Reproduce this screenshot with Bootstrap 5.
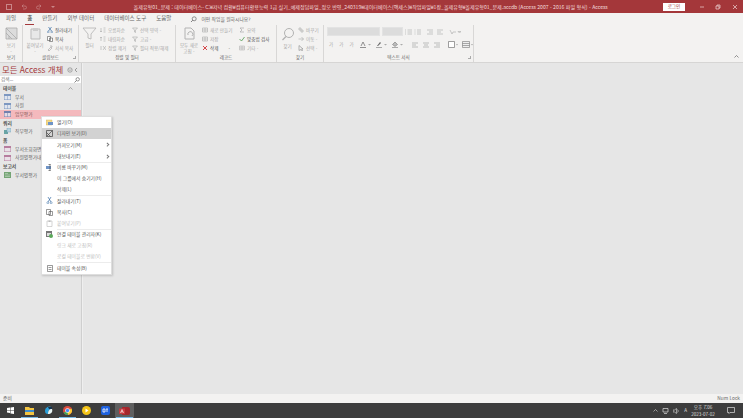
<!DOCTYPE html>
<html lang="ko">
<head>
<meta charset="UTF-8">
<title>Access</title>
<link rel="stylesheet" href="https://cdn.jsdelivr.net/npm/bootstrap@5.3.3/dist/css/bootstrap.min.css">
<style>
html, body { height: 100%; margin: 0; overflow: hidden; }
body { width: 743px; height: 418px; display: flex; flex-direction: column; background: #e6e6e6; font-family: "Noto Sans CJK KR", "Liberation Sans", sans-serif; font-size: 5px; line-height: 1; color: #555; position: relative; }
svg { display: block; flex: none; }
.title-bar { height: 13px; background: #a4373a; color: #f3dcdc; padding-left: 6px; }
.qat { width: 54px; gap: 9px; opacity: .55; }
.title-text { width: 474px; margin-left: 74px; white-space: nowrap; font-size: 5.07px; }
.login-btn { width: 23px; height: 8px; margin-left: 55px; background: #fff; color: #a4373a; font-size: 4.6px; }
.win-btns { margin-left: 8px; width: 50px; justify-content: space-around; }
.tab-bar { height: 12px; background: #f3f2f1; padding-left: 1px; color: #666; font-size: 5.5px; }
.tab-item { padding: 0 5px; height: 12px; display: flex; align-items: center; position: relative; }
.tab-active { color: #444; font-weight: 500; margin: 0 0 0 1px; }
.tab-active::after { content: ""; position: absolute; left: 3px; right: 3px; bottom: 0; height: 1.5px; background: #a4373a; }
.tab-search { margin-left: 9px; font-size: 4.8px; }
.ribbon { height: 38px; background: #f3f2f1; border-bottom: 1px solid #d6d5d4; position: relative; }
.rb-group { height: 37px; border-right: 1px solid #d8d7d6; display: flex; flex-direction: column; flex: none; }
.rb-body { flex: 1; display: flex; padding-top: 2px; }
.rb-label { height: 8px; line-height: 7px; text-align: center; font-size: 4.6px; color: #666; position: relative; }
.launcher { position: absolute; right: 2px; top: 2px; width: 3px; height: 3px; border-right: 1px solid #aaa; border-bottom: 1px solid #aaa; }
.big-btn { display: flex; flex-direction: column; align-items: center; gap: 2px; color: #a6a6a6; font-size: 4.6px; text-align: center; line-height: 6px; }
.rb-col { display: flex; flex-direction: column; gap: 2.6px; padding-top: 0; }
.rb-row { display: flex; align-items: center; gap: 2px; height: 6.5px; white-space: nowrap; font-size: 4.6px; color: #a8a8a8; }
.rb-row.on { color: #555; }
.ico { width: 6px; height: 6px; }
.combo { height: 9px; background: #dcdcdc; border: 1px solid #e3e3e3; }
.fmt-body { flex-direction: column; padding-left: 3px; gap: 5px; }
.fmt-top { gap: 2px; }
.fmt-low { gap: 4px; padding-left: 2px; }
.main-area { flex: 1; min-height: 0; }
.nav-pane { width: 82px; background: #e6e6e6; border-right: 1px solid #cfcfcf; flex: none; }
.nav-title { height: 13px; padding: 0 2px; color: #a4373a; font-size: 8.4px; white-space: nowrap; }
.nav-search { height: 7px; background: #fff; padding: 0 1px; color: #777; font-size: 4.6px; }
.nav-head { height: 8.5px; padding-left: 3px; font-weight: 700; font-size: 4.8px; color: #555; display: flex; align-items: center; justify-content: space-between; }
.nav-first { margin-top: 1px; }
.nav-item { height: 8.8px; padding-left: 4px; gap: 4px; color: #666; font-size: 4.8px; white-space: nowrap; overflow: hidden; }
.nav-sel { background: #f4b9bd; color: #85595b; }
.nav-ico { opacity: .75; }
.work-area { background: #e6e6e6; border-left: 1px solid #efefef; }
.status-bar { height: 9px; background: #f3f2f1; padding: 0 3px; color: #666; font-size: 4.8px; }
.task-bar { height: 15px; background: #3d3d3d; color: #ddd; }
.task-cell { width: 19px; height: 15px; position: relative; }
.task-run::after { content: ""; position: absolute; left: 1px; right: 1px; bottom: 0; height: 1px; background: #79b8e4; }
.task-cur { background: #5f5f5f; }
.tray { gap: 4px; font-size: 4.6px; }
.clock { text-align: center; line-height: 1.35; width: 24px; }
.ctx-menu { position: absolute; left: 41px; top: 116px; width: 71px; background: #fff; border: 1px solid #dedede; box-shadow: 1px 1px 2px rgba(0,0,0,.16); }
.ctx-row { height: 11.2px; display: flex; align-items: center; font-size: 4.8px; color: #555; white-space: nowrap; position: relative; }
.ctx-ico { width: 15px; display: flex; justify-content: center; flex: none; }
.ctx-hot { background: #d2d2d2; }
.ctx-off { color: #bcbcbc; }
.ctx-sub::after { content: ""; position: absolute; right: 3px; top: 4px; width: 2.5px; height: 2.5px; border-top: 1px solid #777; border-right: 1px solid #777; transform: rotate(45deg); }
.ctx-sep::before { content: ""; position: absolute; left: 15px; right: 0; top: 0; border-top: 1px solid #ececec; }
</style>
</head>
<body>
<div class="title-bar d-flex align-items-center">
    <div class="qat d-flex align-items-center">
        <svg width="6" height="6" viewBox="0 0 6 6"><rect x=".5" y=".5" width="5" height="5" fill="none" stroke="#e8c8c8"/></svg>
        <svg width="6" height="6" viewBox="0 0 6 6"><path d="M1 2h3a1.500 1.500 0 0 1 0 3H2M1 2l1.500-1.500M1 2l1.500 1.500" fill="none" stroke="#e8c8c8" stroke-width=".7"/></svg>
        <svg width="6" height="6" viewBox="0 0 6 6"><path d="M5 2H2a1.500 1.500 0 0 0 0 3h2M5 2L3.500.5M5 2L3.500 3.500" fill="none" stroke="#e8c8c8" stroke-width=".7"/></svg>
        <svg width="4" height="4" viewBox="0 0 4 4"><path d="M0 1h4L2 3z" fill="#e8c8c8"/></svg>
    </div>
    <div class="title-text">올제유형01_문제 : 데이터베이스- C:₩저녁 컴활₩컴퓨터활용능력 1급 실기_예제정답파일_정오 반영_240319₩데이터베이스(액세스)₩작업파일₩1장_올제유형₩올제유형01_문제.accdb (Access 2007 - 2016 파일 형식) - Access</div>
    <div class="login-btn d-flex align-items-center justify-content-center flex-none">로그인</div>
    <div class="win-btns d-flex align-items-center">
        <svg width="6" height="6" viewBox="0 0 6 6"><path d="M1 3h4" stroke="#efd6d6" stroke-width=".7"/></svg>
        <svg width="6" height="6" viewBox="0 0 6 6"><path d="M1 2h3v3H1zM2 2V1h3v3H4" fill="none" stroke="#efd6d6" stroke-width=".7"/></svg>
        <svg width="6" height="6" viewBox="0 0 6 6"><path d="M1 1l4 4M5 1L1 5" stroke="#efd6d6" stroke-width=".7"/></svg>
    </div>
</div>

<div class="tab-bar d-flex align-items-center">
    <div class="tab-item">파일</div>
    <div class="tab-item tab-active">홈</div>
    <div class="tab-item">만들기</div>
    <div class="tab-item">외부 데이터</div>
    <div class="tab-item">데이터베이스 도구</div>
    <div class="tab-item">도움말</div>
    <div class="tab-item tab-search"><svg width="7" height="7" viewBox="0 0 7 7"><circle cx="4.200" cy="2.800" r="2" fill="none" stroke="#666" stroke-width=".7"/><path d="M2.800 4.200L1 6" stroke="#666" stroke-width=".8"/></svg><span class="ms-1">어떤 작업을 원하시나요?</span></div>
</div>

<div class="ribbon d-flex">
    <div class="rb-group" style="width:23px">
        <div class="rb-body justify-content-center">
            <div class="big-btn"><svg width="13" height="13" viewBox="0 0 13 13"><path d="M1 1h11v11H1zM1 1l11 11M1 6l6 6M4 12V9" fill="#dcdcdc" stroke="#a9a9a9" stroke-width=".8"/></svg><span>보기<br>-</span></div>
        </div>
        <div class="rb-label">보기</div>
    </div>
    <div class="rb-group" style="width:56px">
        <div class="rb-body">
            <div class="big-btn" style="width:24px"><svg width="13" height="13" viewBox="0 0 13 13"><path d="M2 2h9v10H2z" fill="#e8e8e8" stroke="#bbb"/><path d="M4 1h5v3H4z" fill="#ccc"/></svg><span>붙여넣기<br>-</span></div>
            <div class="rb-col">
                <div class="rb-row on"><svg class="ico" viewBox="0 0 6 6"><path d="M1.500 0l3 4M4.500 0l-3 4" stroke="#3a6ea5" stroke-width=".7"/><circle cx="1.300" cy="5" r=".9" fill="none" stroke="#3a6ea5" stroke-width=".5"/><circle cx="4.700" cy="5" r=".9" fill="none" stroke="#3a6ea5" stroke-width=".5"/></svg>잘라내기</div>
                <div class="rb-row on"><svg class="ico" viewBox="0 0 6 6"><path d="M.5.500h3v4h-3zM2.500 2h3v3.500h-3z" fill="#fff" stroke="#555" stroke-width=".6"/></svg>복사</div>
                <div class="rb-row"><svg class="ico" viewBox="0 0 6 6"><path d="M1 5l3-3 1 1-3 3zM3 1h2v1" fill="none" stroke="#aaa" stroke-width=".7"/></svg>서식 복사</div>
            </div>
        </div>
        <div class="rb-label">클립보드<span class="launcher"></span></div>
    </div>
    <div class="rb-group" style="width:97px">
        <div class="rb-body">
            <div class="big-btn" style="width:21px"><svg width="15" height="13" viewBox="0 0 15 13"><path d="M1 1h13L9 7v5l-3-1V7z" fill="#f3f2f1" stroke="#b2b2b2" stroke-width=".8"/></svg><span>필터</span></div>
            <div class="rb-col" style="width:32px">
                <div class="rb-row"><svg class="ico" viewBox="0 0 6 6"><path d="M1 1v4M1 5l-1-1M1 5l1-1M3.500 1h2M3.500 3h2M3.500 5h2" stroke="#aaa" stroke-width=".6"/></svg>오름차순</div>
                <div class="rb-row"><svg class="ico" viewBox="0 0 6 6"><path d="M1 1v4M1 1L0 2M1 1l1 1M3.500 1h2M3.500 3h2M3.500 5h2" stroke="#aaa" stroke-width=".6"/></svg>내림차순</div>
                <div class="rb-row"><svg class="ico" viewBox="0 0 6 6"><path d="M1 1v4M3 1l3 4M6 1L3 5" stroke="#aaa" stroke-width=".6"/></svg>정렬 제거</div>
            </div>
            <div class="rb-col">
                <div class="rb-row"><svg class="ico" viewBox="0 0 6 6"><path d="M.5 1h5L3.500 3v2.500l-1-.5V3z" fill="none" stroke="#aaa" stroke-width=".6"/></svg>선택 영역 -</div>
                <div class="rb-row"><svg class="ico" viewBox="0 0 6 6"><path d="M.5 1h5L3.500 3v2.500l-1-.5V3z" fill="none" stroke="#aaa" stroke-width=".6"/></svg>고급 -</div>
                <div class="rb-row"><svg class="ico" viewBox="0 0 6 6"><path d="M.5 1h5L3.500 3v2.500l-1-.5V3z" fill="none" stroke="#aaa" stroke-width=".6"/></svg>필터 적용/해제</div>
            </div>
        </div>
        <div class="rb-label">정렬 및 필터</div>
    </div>
    <div class="rb-group" style="width:101px">
        <div class="rb-body">
            <div class="big-btn" style="width:26px"><svg width="13" height="13" viewBox="0 0 13 13"><path d="M2 1h6l3 3v8H2z" fill="#f3f2f1" stroke="#b2b2b2"/><path d="M5 8a2.500 2.500 0 1 1 4 1" fill="none" stroke="#b2b2b2"/></svg><span>모두 새로<br>고침 -</span></div>
            <div class="rb-col" style="width:37px">
                <div class="rb-row"><svg class="ico" viewBox="0 0 6 6"><path d="M.5 1h5v4h-5zM.5 3h5M3 1v4" fill="none" stroke="#aaa" stroke-width=".6"/></svg>새로 만들기</div>
                <div class="rb-row"><svg class="ico" viewBox="0 0 6 6"><path d="M.5 1h5v4h-5zM.5 3h5M3 1v4" fill="none" stroke="#aaa" stroke-width=".6"/></svg>저장</div>
                <div class="rb-row on"><svg class="ico" viewBox="0 0 6 6"><path d="M1 1l4 4M5 1L1 5" stroke="#d13438" stroke-width=".9"/></svg>삭제 <span class="ms-2">-</span></div>
            </div>
            <div class="rb-col">
                <div class="rb-row"><svg class="ico" viewBox="0 0 6 6"><path d="M5 1H1l2 2-2 2h4" fill="none" stroke="#aaa" stroke-width=".7"/></svg>요약</div>
                <div class="rb-row on"><svg class="ico" viewBox="0 0 6 6"><path d="M.5 3l2 2 3-4" fill="none" stroke="#4f9a4f" stroke-width=".8"/></svg>맞춤법 검사</div>
                <div class="rb-row"><svg class="ico" viewBox="0 0 6 6"><path d="M.5 1h5v4h-5zM.5 3h5M2.200 1v4M3.800 1v4" fill="none" stroke="#aaa" stroke-width=".5"/></svg>기타 -</div>
            </div>
        </div>
        <div class="rb-label">레코드</div>
    </div>
    <div class="rb-group" style="width:47px">
        <div class="rb-body">
            <div class="big-btn" style="width:21px"><svg width="14" height="14" viewBox="0 0 14 14"><circle cx="8" cy="6" r="4.500" fill="none" stroke="#b2b2b2"/><path d="M5 9.500L1.500 13" stroke="#b2b2b2" stroke-width="1.200"/></svg><span>찾기</span></div>
            <div class="rb-col">
                <div class="rb-row"><svg class="ico" viewBox="0 0 6 6"><path d="M1 1h2v2H1zM3 3h2v2H3z" fill="none" stroke="#aaa" stroke-width=".6"/></svg>바꾸기</div>
                <div class="rb-row"><svg class="ico" viewBox="0 0 6 6"><path d="M.5 3h5M3.500 1l2 2-2 2" fill="none" stroke="#aaa" stroke-width=".6"/></svg>이동 -</div>
                <div class="rb-row"><svg class="ico" viewBox="0 0 6 6"><path d="M1 .5v5l1.500-1 1 1.500 1-.5-1-1.500H5z" fill="none" stroke="#888" stroke-width=".6"/></svg>선택 -</div>
            </div>
        </div>
        <div class="rb-label">찾기</div>
    </div>
    <div class="rb-group" style="width:150px">
        <div class="rb-body fmt-body">
            <div class="d-flex align-items-center fmt-top">
                <div class="combo" style="width:53px"></div>
                <div class="combo" style="width:21px"></div>
                <svg width="16" height="6" viewBox="0 0 16 6"><path d="M0 1h1M0 3h1M0 5h1M2.500 1H7M2.500 3H7M2.500 5H7M9.500 1h1M9.500 3h1M9.500 5h1M12 1h4M12 3h4M12 5h4" stroke="#aaa" stroke-width=".6"/></svg>
                <svg class="ms-1" width="16" height="6" viewBox="0 0 16 6"><path d="M0 1h6M2 3h4M0 5h6M10 1h6M10 3h4M10 5h6" stroke="#aaa" stroke-width=".6"/></svg>
                <svg class="ms-1" width="12" height="6" viewBox="0 0 12 6"><path d="M1 1l2 4 1-2h3M9 2.500h3L10.500 4z" fill="none" stroke="#aaa" stroke-width=".6"/></svg>
            </div>
            <div class="d-flex align-items-center fmt-low">
                <div class="rb-row" style="gap:6px;width:30px"><span>가</span><span>가</span><span>가</span></div>
                <svg width="12" height="7" viewBox="0 0 12 7"><path d="M1 5l2-4 2 4M0 6.500h6" fill="none" stroke="#666" stroke-width=".7"/><path d="M8 3h3L9.500 4.500z" fill="#aaa"/></svg>
                <svg width="12" height="7" viewBox="0 0 12 7"><path d="M1 5l3-4 1 1-3 3z" fill="#666"/><path d="M0 6.500h6" stroke="#a9a9a9"/><path d="M8 3h3L9.500 4.500z" fill="#aaa"/></svg>
                <svg width="12" height="7" viewBox="0 0 12 7"><path d="M3 1l2.500 2.500L3 5.500.5 3.500z" fill="#bbb" stroke="#666" stroke-width=".5"/><path d="M0 6.500h6" stroke="#a9a9a9"/><path d="M8 3h3L9.500 4.500z" fill="#aaa"/></svg>
                <svg class="ms-1" width="28" height="6" viewBox="0 0 28 6"><path d="M0 1h6M0 3h4M0 5h6M11 1h6M12 3h4M11 5h6M22 1h6M24 3h4M22 5h6" stroke="#999" stroke-width=".6"/></svg>
                <svg class="ms-1" width="10" height="7" viewBox="0 0 10 7"><path d="M.5.500h6v6h-6z" fill="#fff" stroke="#777" stroke-width=".7"/><path d="M8 3h2L9 4.500z" fill="#aaa"/></svg>
                <svg width="11" height="7" viewBox="0 0 11 7"><path d="M.5.500h7v6h-7zM.5 2.500h7M.5 4.500h7" fill="#eee" stroke="#777" stroke-width=".6"/><path d="M9 3h2L10 4.500z" fill="#aaa"/></svg>
            </div>
        </div>
        <div class="rb-label">텍스트 서식<span class="launcher"></span></div>
    </div>
    <svg class="ms-auto me-1 mt-auto mb-1" width="5" height="3" viewBox="0 0 5 3"><path d="M.5 2.500L2.500.5l2 2" fill="none" stroke="#666" stroke-width=".7"/></svg>
</div>

<div class="main-area d-flex">
    <div class="nav-pane d-flex flex-column">
        <div class="nav-title d-flex align-items-center justify-content-between">
            <span>모든 Access 개체</span>
            <svg width="12" height="6" viewBox="0 0 12 6"><circle cx="3" cy="3" r="2.200" fill="none" stroke="#666" stroke-width=".5"/><path d="M2 2.500l1 1 1-1M10 1L8 3l2 2" fill="none" stroke="#666" stroke-width=".6"/></svg>
        </div>
        <div class="nav-search d-flex align-items-center justify-content-between">
            <span>검색...</span>
            <svg width="6" height="6" viewBox="0 0 6 6"><circle cx="3.700" cy="2.300" r="1.700" fill="none" stroke="#555" stroke-width=".6"/><path d="M2.500 3.500L.5 5.500" stroke="#555" stroke-width=".7"/></svg>
        </div>
        <div class="nav-head nav-first">테이블<svg class="me-2" width="5" height="3" viewBox="0 0 5 3"><path d="M.5 2.500L2.500.5l2 2" fill="none" stroke="#777" stroke-width=".6"/></svg></div>
        <div class="nav-item d-flex align-items-center"><svg class="nav-ico" width="7" height="6" viewBox="0 0 7 6"><rect width="7" height="6" fill="#5b7fb5"/><path d="M.5 2h6v3.500h-6z" fill="#dfe7f3"/><path d="M3.500 2v4" stroke="#5b7fb5" stroke-width=".5"/></svg>부서</div>
        <div class="nav-item d-flex align-items-center"><svg class="nav-ico" width="7" height="6" viewBox="0 0 7 6"><rect width="7" height="6" fill="#5b7fb5"/><path d="M.5 2h6v3.500h-6z" fill="#dfe7f3"/><path d="M3.500 2v4" stroke="#5b7fb5" stroke-width=".5"/></svg>사원</div>
        <div class="nav-item nav-sel d-flex align-items-center"><svg class="nav-ico" width="7" height="6" viewBox="0 0 7 6"><rect width="7" height="6" fill="#4a6ea8"/><path d="M.5 2h6v3.500h-6z" fill="#dfe7f3"/><path d="M3.500 2v4" stroke="#4a6ea8" stroke-width=".5"/></svg>업무평가</div>
        <div class="nav-head">쿼리</div>
        <div class="nav-item d-flex align-items-center"><svg class="nav-ico" width="7" height="7" viewBox="0 0 7 7"><path d="M0 2h4v4H0z" fill="#3f8f8f"/><path d="M3 0h4v4H3z" fill="#a9cfe0" stroke="#3c7a9c" stroke-width=".4"/></svg>직무평가</div>
        <div class="nav-head">폼</div>
        <div class="nav-item d-flex align-items-center"><svg class="nav-ico" width="7" height="6" viewBox="0 0 7 6"><rect width="7" height="6" fill="#a65a86"/><path d="M.5 2h6v3.500h-6z" fill="#eadfe8"/></svg>부서조회화면</div>
        <div class="nav-item d-flex align-items-center"><svg class="nav-ico" width="7" height="6" viewBox="0 0 7 6"><rect width="7" height="6" fill="#a65a86"/><path d="M.5 2h6v3.500h-6z" fill="#eadfe8"/></svg>사원별평가내역</div>
        <div class="nav-head">보고서</div>
        <div class="nav-item d-flex align-items-center"><svg class="nav-ico" width="7" height="6" viewBox="0 0 7 6"><rect width="7" height="6" fill="#4f8f4f"/><path d="M1 1.500h3M1 3h5M1 4.500h5" stroke="#cfe3cf" stroke-width=".5"/></svg>부서별평가</div>
    </div>
    <div class="work-area flex-grow-1"></div>
</div>

<div class="status-bar d-flex align-items-center justify-content-between">
    <span>준비</span><span>Num Lock</span>
</div>

<div class="task-bar d-flex align-items-center">
    <div class="task-cell d-flex align-items-center justify-content-center" style="width:20px"><svg width="7" height="7" viewBox="0 0 7 7"><path d="M0 1l3-.5V3H0zM3.500.4L7 0v3H3.500zM0 3.500h3V6L0 5.600zM3.500 3.500H7V7l-3.500-.5z" fill="#fff"/></svg></div>
    <div class="task-cell task-run d-flex align-items-center justify-content-center"><svg width="9" height="8" viewBox="0 0 9 8"><path d="M0 0h4l1 1h4v7H0z" fill="#f4c542"/><path d="M0 3h9v2H0z" fill="#3e8ed0"/></svg></div>
    <div class="task-cell d-flex align-items-center justify-content-center"><svg width="9" height="9" viewBox="0 0 9 9"><path d="M1 5a4 4 0 0 1 7-3v1C5 3 4 5 4 8 2 8 1 7 1 5z" fill="#2b9fd9"/><path d="M4 8c0-3 1-5 4-5 1 3-1 5-4 5z" fill="#e8f4f4"/><path d="M4 1h4v2H5z" fill="#17324d"/></svg></div>
    <div class="task-cell task-run d-flex align-items-center justify-content-center"><svg width="9" height="9" viewBox="0 0 9 9"><circle cx="4.500" cy="4.500" r="4.500" fill="#dd4b3e"/><path d="M4.500 4.500L.6 6.700A4.500 4.500 0 0 0 5 9z" fill="#3aa757"/><path d="M4.500 4.500L5 9A4.500 4.500 0 0 0 8.500 2.500z" fill="#fcc934"/><circle cx="4.500" cy="4.500" r="2.300" fill="#fff"/><circle cx="4.500" cy="4.500" r="1.700" fill="#4a8bf5"/></svg></div>
    <div class="task-cell d-flex align-items-center justify-content-center"><svg width="9" height="9" viewBox="0 0 9 9"><circle cx="4.500" cy="4.500" r="4.500" fill="#f5c518"/><path d="M3.500 2.500l3 2-3 2z" fill="#fff"/></svg></div>
    <div class="task-cell d-flex align-items-center justify-content-center"><svg width="9" height="9" viewBox="0 0 9 9"><rect width="9" height="9" rx="2" fill="#1f62e0"/><path d="M2 3h2v3H2zM5 3h2M6 3v3" fill="none" stroke="#fff" stroke-width=".8"/></svg></div>
    <div class="task-cell task-run task-cur d-flex align-items-center justify-content-center"><svg width="11" height="10" viewBox="0 0 11 10"><path d="M3 1h6a2 2 0 0 1 2 2v4a2 2 0 0 1-2 2H3z" fill="#a4262c"/><path d="M0 2.500h6v5.500H0z" fill="#c8393f"/><path d="M1.500 7L3 3.500 4.500 7M2 5.800h2" fill="none" stroke="#fff" stroke-width=".6"/></svg></div>
    <div class="tray d-flex align-items-center ms-auto">
        <svg width="5" height="3" viewBox="0 0 5 3"><path d="M.5 2.500L2.500.5l2 2" fill="none" stroke="#ddd" stroke-width=".6"/></svg>
        <svg width="7" height="6" viewBox="0 0 7 6"><path d="M1 .5h5v3.500H1zM2 5.500h3" fill="none" stroke="#ddd" stroke-width=".7"/></svg>
        <svg width="7" height="6" viewBox="0 0 7 6"><path d="M0 2h1.500L3.500.5v5L1.500 4H0zM4.500 1.500a2 2 0 0 1 0 3" fill="none" stroke="#ddd" stroke-width=".6"/></svg>
        <span>A</span>
        <div class="clock"><div>오후 7:06</div><div>2023-07-02</div></div>
        <svg class="ms-2 me-2" width="8" height="7" viewBox="0 0 8 7"><path d="M.5.500h7v5H3L2 6.500v-1H.5z" fill="none" stroke="#ddd" stroke-width=".7"/></svg>
    </div>
</div>

<div class="ctx-menu">
    <div class="ctx-row"><span class="ctx-ico"><svg width="7" height="7" viewBox="0 0 7 7"><path d="M0 1h6v5H0z" fill="#f4d98b" stroke="#c7a64f" stroke-width=".4"/><path d="M2 3h5v3H2z" fill="#6f94c7"/></svg></span><span>열기(O)</span></div>
    <div class="ctx-row ctx-hot"><span class="ctx-ico"><svg width="7" height="7" viewBox="0 0 7 7"><path d="M.5.500h6v6h-6zM.5 6.500l6-6M.5 2.500l4 4" fill="none" stroke="#444" stroke-width=".7"/></svg></span><span>디자인 보기(D)</span></div>
    <div class="ctx-row ctx-sub"><span class="ctx-ico"></span><span>가져오기(M)</span></div>
    <div class="ctx-row ctx-sub"><span class="ctx-ico"></span><span>내보내기(E)</span></div>
    <div class="ctx-row ctx-sep"><span class="ctx-ico"><svg width="7" height="7" viewBox="0 0 7 7"><path d="M0 2h5v3H0z" fill="#6f94c7"/><path d="M3 0h1v7H3M2 0h3M2 7h3" fill="none" stroke="#444" stroke-width=".6"/></svg></span><span>이름 바꾸기(M)</span></div>
    <div class="ctx-row"><span class="ctx-ico"></span><span>이 그룹에서 숨기기(H)</span></div>
    <div class="ctx-row"><span class="ctx-ico"></span><span>삭제(L)</span></div>
    <div class="ctx-row ctx-sep"><span class="ctx-ico"><svg width="7" height="7" viewBox="0 0 7 7"><path d="M2 0l3 5M5 0L2 5" stroke="#3a6ea5" stroke-width=".7"/><circle cx="1.800" cy="5.800" r="1" fill="none" stroke="#3a6ea5" stroke-width=".5"/><circle cx="5.200" cy="5.800" r="1" fill="none" stroke="#3a6ea5" stroke-width=".5"/></svg></span><span>잘라내기(T)</span></div>
    <div class="ctx-row"><span class="ctx-ico"><svg width="7" height="7" viewBox="0 0 7 7"><path d="M.5.500h4v5h-4zM3 2.500h3.500v4H3z" fill="#fff" stroke="#555" stroke-width=".6"/></svg></span><span>복사(C)</span></div>
    <div class="ctx-row ctx-off"><span class="ctx-ico"><svg width="7" height="7" viewBox="0 0 7 7"><path d="M1 1h5v5.500H1z" fill="none" stroke="#bbb" stroke-width=".6"/><path d="M2.500.5h2v1.500h-2z" fill="#bbb"/></svg></span><span>붙여넣기(P)</span></div>
    <div class="ctx-row ctx-sep"><span class="ctx-ico"><svg width="7" height="7" viewBox="0 0 7 7"><rect width="6" height="6" fill="#777"/><path d="M1 2h4v3H1z" fill="#ddd"/><circle cx="5" cy="5" r="2" fill="#5aa85a"/></svg></span><span>연결 테이블 관리자(K)</span></div>
    <div class="ctx-row ctx-off"><span class="ctx-ico"></span><span>링크 새로 고침(R)</span></div>
    <div class="ctx-row ctx-off"><span class="ctx-ico"></span><span>로컬 테이블로 변환(V)</span></div>
    <div class="ctx-row ctx-sep"><span class="ctx-ico"><svg width="6" height="7" viewBox="0 0 6 7"><path d="M.5.500h5v6h-5zM1.500 2.500h3M1.500 4.500h3" fill="none" stroke="#555" stroke-width=".6"/></svg></span><span>테이블 속성(B)</span></div>
</div>
<script src="https://cdn.jsdelivr.net/npm/bootstrap@5.3.3/dist/js/bootstrap.bundle.min.js"></script>
</body>
</html>
